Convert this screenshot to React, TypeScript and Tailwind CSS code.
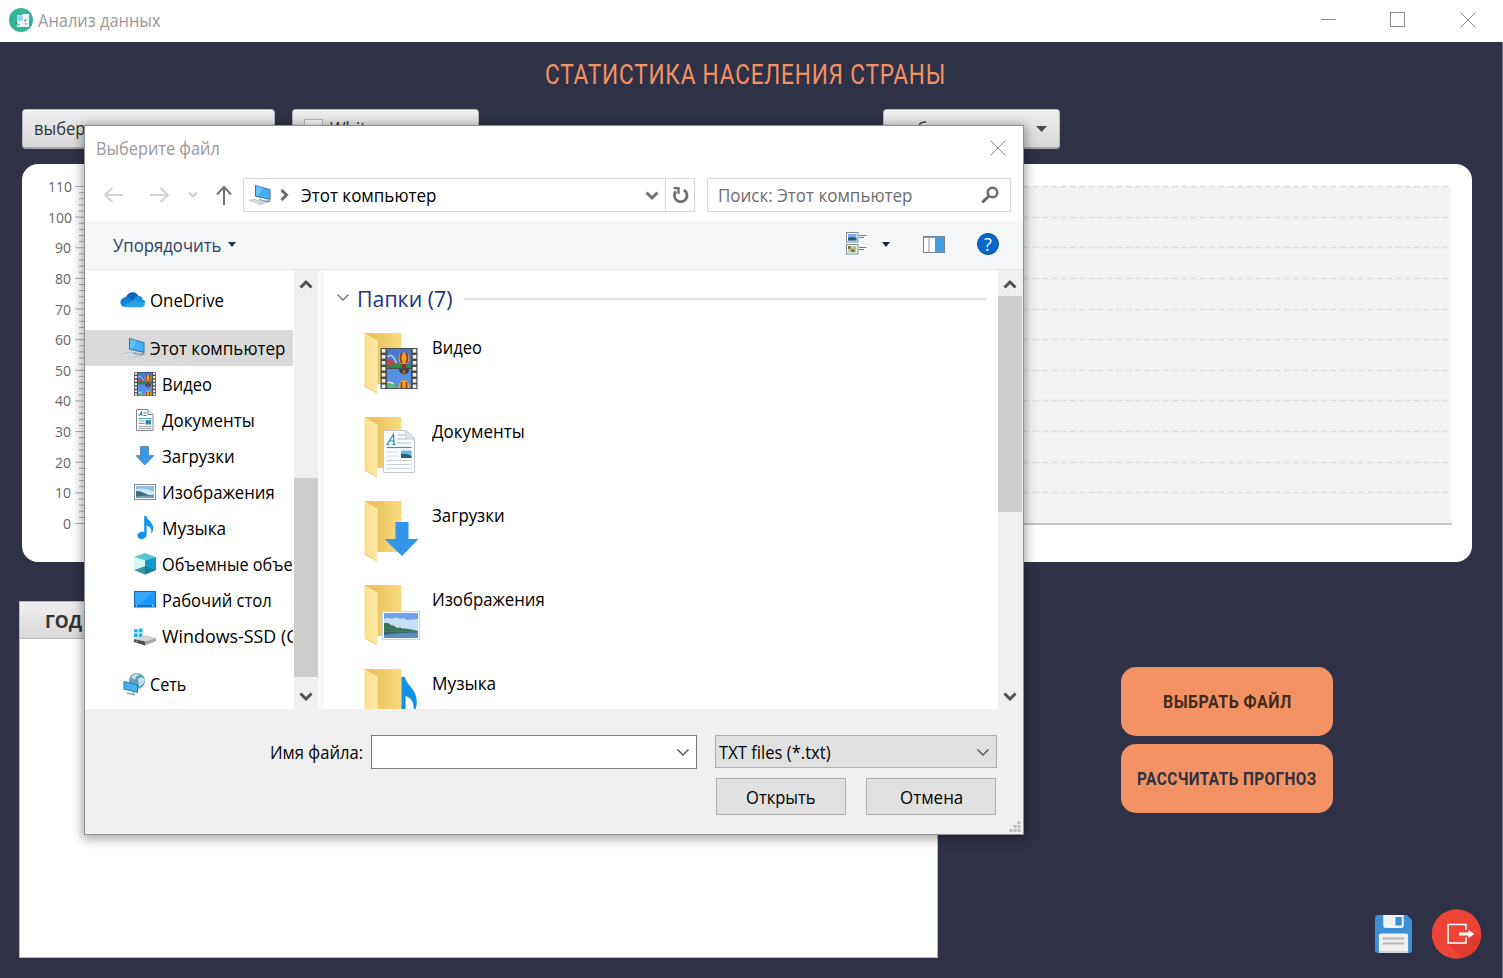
import { useLayoutEffect, useRef, useState, type ReactNode } from "react";

/* Single line of text whose glyph run is scaled horizontally to a given width. */
function Fit({ w, className = "", children }: { w: number; className?: string; children: ReactNode }) {
  const ref = useRef<HTMLSpanElement>(null);
  const [scale, setScale] = useState(1);
  useLayoutEffect(() => {
    if (ref.current && ref.current.offsetWidth) setScale(w / ref.current.offsetWidth);
  }, [w]);
  return (
    <span className={"block shrink-0 whitespace-nowrap " + className} style={{ width: w }}>
      <span ref={ref} className="inline-block origin-left" style={{ transform: `scaleX(${scale})` }}>
        {children}
      </span>
    </span>
  );
}

const Cross = () => (
  <svg width="16" height="16" viewBox="0 0 16 16" stroke="#8c8c8c" strokeWidth="1">
    <path d="M.5 .5 15.5 15.5M15.5 .5 .5 15.5" />
  </svg>
);

const Chevron = ({ dir, w = 14, color = "#505050", thick = 3 }: { dir: "up" | "down" | "right"; w?: number; color?: string; thick?: number }) => (
  <svg width={w} height={w} viewBox="0 0 14 14" fill="none" stroke={color} strokeWidth={thick}>
    <path d={dir === "up" ? "M1.5 9.500 7 4 12.5 9.500" : dir === "down" ? "M1.5 4.5 7 10 12.5 4.5" : "M4.5 2 9.5 7 4.5 12"} />
  </svg>
);

const Computer = () => (
  <svg width="24" height="22" viewBox="0 0 24 22">
    <path d="M7 1 22.5 5.2V16L7 12.6Z" fill="#3a6f96" />
    <path d="M8 2.2 21.6 6V14.8L8 11.7Z" fill="#45b0f5" />
    <path d="M8 2.2 15 4 10 12.1 8 11.7Z" fill="#63c3fb" />
    <path d="M11 15.5 17 17.2 22 16.6M18 18.2 22.5 17" stroke="#8fa3af" strokeWidth="1.4" fill="none" />
    <path d="M.3 16.3 6.5 15 18 19 12 21Z" fill="#a9b7c0" />
    <path d="M2 16.6 13.5 20M4.5 16 16 19.3M4 18 9 16M8 19 12 17.4" stroke="#f1f4f5" strokeWidth=".7" />
  </svg>
);

const FilmArt = () => (
  <>
    <rect width="37" height="41" fill="#4a4a4a" />
    <rect x="6.5" y="1" width="24" height="18.5" fill="#4878cf" />
    <rect x="6.5" y="21" width="24" height="19" fill="#5590e4" />
    <path d="M7 17V13l2-3 3 4 2-2 2 5Z" fill="#d13c59" />
    <path d="M7 9q4-4 7 2l2 4" stroke="#a7e3f0" strokeWidth="1.5" fill="none" />
    <path d="M6.5 17q10-2 24 0v2.5h-24Z" fill="#338a47" />
    <ellipse cx="23.5" cy="10.500" rx="5.500" ry="6" fill="#e7a91d" />
    <path d="M21.500 5q-3 5 0 10M25.500 5q3 5 0 10" stroke="#a3302d" strokeWidth="1.800" fill="none" />
    <rect x="21.5" y="16" width="4" height="3.5" fill="#8a2c22" />
    <path d="M18.5 21h10q0 4-3 5h-3q-4-1-4-5Z" fill="#353b45" />
    <path d="M22 22h3v5h-3Z" fill="#8d642e" />
    <path d="M7 36q4-3 8 1l2 3H7Z" fill="#5abc82" />
    <path d="M7 35q3-2 6 1" stroke="#d7edfb" strokeWidth="1.4" fill="none" />
    <path d="M18 40q0-8 5.5-8t5.5 8Z" fill="#e3b01e" />
    <path d="M21 34v6M26 34v6" stroke="#a3342b" strokeWidth="1.800" />
    {[1, 7, 13, 19, 25, 31, 36.5].map((y) => (
      <g key={y} fill="#f3f0e4">
        <rect x="1.3" y={y} width="3.6" height="3.6" />
        <rect x="32.2" y={y} width="3.6" height="3.6" />
      </g>
    ))}
  </>
);

const PageArt = () => (
  <>
    <path d="M.5 .5H23L31.5 9V42.5H.5Z" fill="#fbfcfd" stroke="#c3c8ce" />
    <path d="M23 .5V9h8.5Z" fill="#e3e6ea" stroke="#c3c8ce" />
    <path d="M14 5h9M14 9h9M14 13h14" stroke="#9cc5d8" strokeWidth="1" />
    <path d="M3.5 17.5h25" stroke="#3c93b8" strokeWidth="1.2" />
    <path d="M3.5 22h12M3.5 26h12M3.5 30.5h25M3.5 34.5h25M3.5 38.5h25" stroke="#cdd2d8" strokeWidth="1" />
    <path d="M4.500 14 10.5 4.5 11 14M6.500 11h4.500M3.500 14.500h2.500M9.5 14.5h3" stroke="#2487b3" strokeWidth="1.200" fill="none" />
    <rect x="18" y="20.500" width="10.500" height="7.500" fill="#6bb5e6" />
    <path d="M18 24q5-1 10.500 2v2H18Z" fill="#28627b" />
  </>
);

const PhotoArt = () => (
  <>
    <rect x=".5" y=".5" width="37" height="28" fill="#f6fbfd" stroke="#c4dbe4" />
    <rect x="2" y="2" width="34" height="25" fill="#6fa2ea" />
    <path d="M2 8q4-2 7 0 5-3 9 0 4-2 7 1l11-1v12H2Z" fill="#c6e1f7" />
    <path d="M2 12q4-1 7 2 3 0 6 3 3-1 5 .5 6-.5 16 2.500v.500H2Z" fill="#3d7453" />
    <rect x="2" y="20.500" width="34" height="6.500" fill="#5f8fb8" />
    <path d="M2 20.500h34v1q-18-.5-34 2.500Z" fill="#34637a" />
  </>
);

const NoteShape = () => (
  <path d="M7 0h2.200c.4 4.300 8.300 6.400 7 14.400-.4 2-1.200 3.500-2 4.600 1-5-.6-8-4.700-9.200V19.500c0 2.300-2.300 4.400-5.200 4.400C1.700 23.900 0 22.600 0 20.600 0 17.700 3.800 15.700 7 16.800Z" fill="#0f93e8" />
);

const Folder = ({ children }: { children: ReactNode }) => (
  <svg width="60" height="64" viewBox="0 0 60 64" className="shrink-0">
    <defs>
      <linearGradient id="fb" x2="1"><stop offset="0" stopColor="#e5bd57" /><stop offset=".5" stopColor="#efca66" /><stop offset="1" stopColor="#fbdb80" /></linearGradient>
      <linearGradient id="ff" x2="1"><stop offset="0" stopColor="#fbdf8c" /><stop offset="1" stopColor="#fce8a7" /></linearGradient>
    </defs>
    <path d="M.5 1H37.500V52H10Z" fill="url(#fb)" />
    <path d="M.5 1 13.300 8.500Q13.800 9 13.800 10V52L12.800 61 .5 54Z" fill="url(#ff)" />
    <path d="M.5 54 12.800 61" stroke="#e4c165" strokeWidth=".8" />
    {children}
  </svg>
);

const DownArrow = () => <path d="M11 0H24V17H34L17.500 34 0 17H11Z" fill="#3294ea" />;

const folders: { name: string; w: number; art: ReactNode }[] = [
  { name: "Видео", w: 50, art: <g transform="translate(16.500 16)"><FilmArt /></g> },
  { name: "Документы", w: 93, art: <g transform="translate(19 14)"><rect x="-6" y="38" width="8" height="8" fill="#fff" /><PageArt /></g> },
  { name: "Загрузки", w: 73, art: <g transform="translate(20.500 22)"><DownArrow /></g> },
  { name: "Изображения", w: 113, art: <g transform="translate(18 27)"><PhotoArt /></g> },
  { name: "Музыка", w: 64, art: <g transform="translate(26 9) scale(1.640 1.950)"><NoteShape /></g> },
];

const tree: { name: string; w: number; icon: ReactNode }[] = [
  { name: "Видео", w: 50, icon: <svg width="22" height="24" viewBox="0 0 37 41"><FilmArt /></svg> },
  {
    name: "Документы", w: 93,
    icon: (
      <svg width="22" height="24" viewBox="0 0 22 24">
        <path d="M2.500 1.500H14L19 6.500V22.500H2.500Z" fill="#fff" stroke="#83898e" />
        <path d="M14 1.500v5h5" fill="#eef0f2" stroke="#83898e" />
        <path d="M5 8 7.500 3.500 8 8M6 6.500h2M9.500 5h3M9.500 7.500h3" stroke="#2386b8" fill="none" />
        <path d="M4.500 10.500H17M4.500 13h6M4.500 15.500h6" stroke="#4b9fca" />
        <path d="M4.500 18.500H17M4.500 20.500H17" stroke="#a0a7ad" />
        <rect x="11.500" y="12" width="5.500" height="4.500" fill="#3e85aa" />
      </svg>
    ),
  },
  { name: "Загрузки", w: 73, icon: <svg width="22" height="24" viewBox="0 0 22 24"><path d="M6.500 2.500h8v9h5.500L10.700 21 2 11.500h4.500Z" fill="#3b98e8" stroke="#5b83a8" strokeWidth=".8" /></svg> },
  {
    name: "Изображения", w: 113,
    icon: (
      <svg width="22" height="24" viewBox="0 0 22 24">
        <rect x=".5" y="4.500" width="21" height="15" fill="#fff" stroke="#8a9096" />
        <rect x="2" y="6" width="18" height="12" fill="#8cbdf0" />
        <path d="M2 9.500q6-3 18 2v3H2Z" fill="#d3e9f8" />
        <path d="M2 11q4-.5 8 2t10 2.500V18H2Z" fill="#3a7177" />
        <path d="M2 16.500q9-1.500 18-1V18H2Z" fill="#6aa3cc" />
      </svg>
    ),
  },
  { name: "Музыка", w: 64, icon: <svg width="22" height="24" viewBox="-3.500 0 22 24"><g transform="scale(.96)"><NoteShape /></g></svg> },
  {
    name: "Объемные объекты", w: 159,
    icon: (
      <svg width="22" height="24" viewBox="0 0 22 24">
        <path d="M0 5 11 1 22 5 11 8.500Z" fill="#57c6d3" />
        <path d="M0 5 11 8.500V22.500L0 18Z" fill="#a5e8e8" />
        <path d="M22 5 11 8.500V22.500L22 18Z" fill="#0f9ccb" />
        <path d="M0 18 11 14 22 18 11 22.500Z" fill="#17788e" opacity=".75" />
        <path d="M0 5 11 8.500V14L0 18Z" fill="#d5f6f3" />
      </svg>
    ),
  },
  {
    name: "Рабочий стол", w: 110,
    icon: (
      <svg width="22" height="24" viewBox="0 0 22 24">
        <rect x=".5" y="3.500" width="21" height="15.500" fill="#1d97fb" stroke="#1669ab" />
        <path d="M1 4h19L5 16.500H1Z" fill="#42abff" opacity=".7" />
        <path d="M1 17.800h20" stroke="#126fb9" strokeWidth="1.500" />
        <path d="M2 17.800h1M18 17.800h2" stroke="#fff" />
      </svg>
    ),
  },
  {
    name: "Windows-SSD (C:)", w: 145,
    icon: (
      <svg width="22" height="24" viewBox="0 0 22 24">
        <path d="M0 5.500 3.700 5v3.600H0ZM4.700 4.800 8.500 4.200v4.400H4.700ZM0 9.600h3.700v3.700L0 12.700ZM4.700 9.600h3.800V14l-3.800-.6Z" fill="#15b5e8" />
        <path d="M0 15 11 11 22 14 11 17.500Z" fill="#d6d6d6" />
        <path d="M0 15 11 17.500V21.500L0 18Z" fill="#484b4c" />
        <path d="M11 17.500 22 14v3L11 21.500Z" fill="#a5a8aa" />
        <circle cx="3" cy="17.500" r=".8" fill="#7fe0a0" />
      </svg>
    ),
  },
];

const combo = "flex h-[40px] items-center rounded-[4px] border border-[#b5b6bb] border-b-2 border-b-[#a4a6ad] bg-gradient-to-b from-[#eeeeee] to-[#d8d8d8] shadow-[inset_0_1px_0_#ffffff] text-[18px] text-[#333333]";

function ChartAxis() {
  const step = 337 / 11;
  return (
    <svg width="1430" height="398" viewBox="0 0 1430 398" className="block">
      <rect x="62" y="23" width="1367" height="337" fill="#f3f3f3" />
      {Array.from({ length: 11 }, (_, i) => (
        <path key={i} d={`M62 ${22.5 + Math.round(i * step)}H1429`} stroke="#dddddd" strokeDasharray="6 3.300" strokeWidth="1.300" />
      ))}
      {Array.from({ length: 56 }, (_, i) => (
        <path key={i} d={`M${i % 5 ? 57 : 53} ${22.5 + (i * 337) / 55}H64`} stroke="#b0b0b0" />
      ))}
      <path d="M62 360H1430" stroke="#909090" />
      <g fill="#666666" fontSize="14" textAnchor="end">
        {Array.from({ length: 12 }, (_, i) => (
          <text key={i} x={i < 2 ? 50 : 49} y={28 + i * step}>{110 - i * 10}</text>
        ))}
      </g>
    </svg>
  );
}

function FileDialog() {
  return (
    <div className="absolute left-[84px] top-[125px] flex h-[710px] w-[940px] flex-col overflow-hidden border border-[#8d8f94] bg-white text-[17.500px] leading-6 text-black">
      <div className="flex h-[44px] shrink-0 items-center justify-between pl-[11px] pr-[17px] text-[#999999]">
        <Fit w={124}>Выберите файл</Fit>
        <Cross />
      </div>
      <div className="flex h-[51px] shrink-0 items-center pb-[2px]">
        <svg width="134" height="24" viewBox="0 0 134 24" className="ml-[16px] shrink-0" fill="none">
          <path d="M22 12H4M11.500 5 4 12l7.500 7M49 12H67M59.500 5 67 12l-7.500 7" stroke="#d4d4d4" strokeWidth="2" />
          <path d="M88 9.500 92 13.500 96 9.500" stroke="#d0d0d0" strokeWidth="2.200" />
          <path d="M123 22V4M116 11.500 123 4l7 7.500" stroke="#737373" strokeWidth="2" />
        </svg>
        <div className="ml-[8px] flex h-[34px] w-[452px] shrink-0 items-center border border-[#d9d9d9]">
          <span className="ml-[4px]"><Computer /></span>
          <span className="ml-[5px]"><Chevron dir="right" color="#6b6b6b" /></span>
          <Fit w={135} className="ml-[10px]">Этот компьютер</Fit>
          <span className="ml-[209px]"><Chevron dir="down" color="#707070" /></span>
          <span className="ml-[6px] flex h-full flex-1 items-center justify-center border-l border-[#d9d9d9]">
            <svg width="20" height="20" viewBox="0 0 20 20" fill="none" stroke="#6f6f6f" strokeWidth="2.800">
              <path d="M6 6.300A6.300 6.300 0 1 0 13.800 5" />
              <path d="M3.500 3.200H8.500V9" strokeWidth="2.300" />
            </svg>
          </span>
        </div>
        <div className="ml-[12px] flex h-[34px] w-[304px] items-center justify-between border border-[#d9d9d9] pl-[10px] pr-[11px] text-[#6d6d6d]">
          <Fit w={194}>Поиск: Этот компьютер</Fit>
          <svg width="18" height="18" viewBox="0 0 18 18" fill="none" stroke="#6c6c6c">
            <circle cx="11.500" cy="6.500" r="4.800" strokeWidth="2.500" />
            <path d="M8 10 1.300 16.300" strokeWidth="3" />
          </svg>
        </div>
      </div>
      <div className="flex h-[49px] shrink-0 items-center border-b border-[#e2e7ea] bg-[#f4f6f8] pb-[2px] text-[#2c4264]">
        <Fit w={108} className="ml-[28px] mt-px">Упорядочить</Fit>
        <svg width="8" height="5" viewBox="0 0 8 5" className="ml-[7px]"><path d="M0 0h8L4 5Z" fill="#21374f" /></svg>
        <svg width="22" height="24" viewBox="0 0 22 24" className="ml-[610px]" fill="none">
          <rect x=".5" y=".5" width="11.500" height="9.500" fill="#fff" stroke="#7f8992" />
          <rect x="2" y="2" width="8.500" height="6.500" fill="#77a9f0" />
          <path d="M2 6q4-2 8.500 0v2.500H2Z" fill="#22616a" />
          <rect x=".5" y="12.500" width="11.500" height="9.500" fill="#fff" stroke="#7f8992" />
          <rect x="2" y="14" width="8.500" height="6.500" fill="#b9d3bd" />
          <path d="M2 14h3v3H2ZM5 17h4v3H5Z" fill="#7a7e2e" />
          <path d="M7 15h3v3H7Z" fill="#d6b52e" />
          <path d="M13 3.500h7.500M13 5.500h5M13 15.500h7.500M13 17.500h5" stroke="#777" />
        </svg>
        <svg width="8" height="5" viewBox="0 0 8 5" className="ml-[14px]"><path d="M0 0h8L4 5Z" fill="#17283d" /></svg>
        <svg width="22" height="17" viewBox="0 0 22 17" className="ml-[33px]">
          <rect x=".5" y=".5" width="21" height="16" fill="#fff" stroke="#74828c" />
          <rect x="12" y="2" width="9" height="14" fill="#3e9fe6" />
          <path d="M6 1v15M1 1.500h20" stroke="#8b98a1" />
        </svg>
        <span className="ml-[32px] flex size-[22px] items-center justify-center rounded-full border border-[#084c94] bg-[#0868cf] text-[18px] leading-none text-white">?</span>
      </div>
      <div className="flex h-[439px] shrink-0">
        <div className="w-[208px] shrink-0 overflow-hidden pt-[12px]">
          <div className="flex h-[36px] items-center pl-[35px]">
            <svg width="26" height="18" viewBox="0 0 26 18">
              <path d="M6 6C8 1 15-1 18.500 5L13 11 5 8Z" fill="#0f64b8" />
              <path d="M5.500 16C-1 16-1.500 7 5.500 6q4-.5 9 4L9 16Z" fill="#1282d4" />
              <path d="M14 8q3-5 7-2.500 1.500 1 1.500 3 3 .5 2.800 3.800L16 13Z" fill="#1a90de" />
              <path d="M3 15 15.500 8.500 25 13q-1 3.300-4 3.300H6Q4 16.300 3 15Z" fill="#28a3e8" />
            </svg>
            <Fit w={74} className="ml-[4px]">OneDrive</Fit>
          </div>
          <div className="mt-[12px] flex h-[36px] items-center bg-[#d9d9d9] pl-[37px]">
            <Computer />
            <Fit w={135} className="ml-[4px]">Этот компьютер</Fit>
          </div>
          {tree.map((t) => (
            <div key={t.name} className="flex h-[36px] items-center pl-[49px]">
              <span className="shrink-0">{t.icon}</span>
              <Fit w={t.w} className="ml-[6px]">{t.name}</Fit>
            </div>
          ))}
          <div className="mt-[12px] flex h-[36px] items-center pl-[38px]">
            <svg width="24" height="24" viewBox="0 0 24 24">
              <circle cx="14" cy="9" r="8" fill="#609fbd" />
              <path d="M8 5q4-5 9-3-5 3-5 6ZM15 7q4-4 7 1-2 6-6 6Z" fill="#c3dfe8" />
              <path d="M.5 9 15 12.500V21L.5 17.500Z" fill="#2778ab" />
              <path d="M1.500 10.200 14 13.300V19.700L1.500 16.700Z" fill="#47b0ef" />
              <path d="M4 21 12 23M10 20v2" stroke="#8ea9b7" strokeWidth="1.300" />
            </svg>
            <Fit w={36} className="ml-[3px]">Сеть</Fit>
          </div>
        </div>
        <div className="ml-px flex w-[24px] shrink-0 flex-col items-center bg-[#f0f0f0] pt-[8px]">
          <Chevron dir="up" />
          <span className="mt-[186px] h-[199px] w-full shrink-0 bg-[#cdcdcd]" />
          <span className="mt-[12px]"><Chevron dir="down" /></span>
        </div>
        <div className="w-[5px] shrink-0 border-r border-[#f0f0f0] bg-[#fafafa]" />
        <div className="min-w-0 flex-1 overflow-hidden">
          <div className="flex h-[62px] items-center pb-[5px] pl-[13px] text-[22px] text-[#26327f]">
            <span className="mt-[-4px]"><Chevron dir="down" color="#707070" thick={1.3} /></span>
            <Fit w={96} className="ml-[7px] mt-[-1px]">Папки (7)</Fit>
            <span className="ml-[11px] h-[2px] w-[522px] bg-[#e3e3e3]" />
          </div>
          {folders.map((f) => (
            <div key={f.name} className="flex h-[84px] pl-[41px]">
              <Folder>{f.art}</Folder>
              <Fit w={f.w} className="ml-[8px] mt-[3px]">{f.name}</Fit>
            </div>
          ))}
        </div>
        <div className="flex w-[25px] shrink-0 flex-col items-center bg-[#f0f0f0] pr-px pt-[8px]">
          <Chevron dir="up" />
          <span className="mb-[177px] mt-[4px] h-[216px] w-full shrink-0 bg-[#cdcdcd]" />
          <Chevron dir="down" />
        </div>
      </div>
      <div className="relative flex-1 bg-[#f0f0f0] pt-[26px]">
        <div className="flex h-[34px] items-center">
          <Fit w={93} className="ml-[185px]">Имя файла:</Fit>
          <div className="ml-[8px] flex h-[34px] w-[326px] items-center justify-end border border-[#7a7a7a] bg-white pr-[6px]">
            <Chevron dir="down" thick={1.3} />
          </div>
          <div className="mb-px ml-[18px] flex h-[33px] w-[282px] items-center justify-between border border-[#adadad] bg-[#e1e1e1] pl-[3px] pr-[6px]">
            <Fit w={112}>TXT files (*.txt)</Fit>
            <Chevron dir="down" thick={1.3} />
          </div>
        </div>
        <div className="mt-[9px] flex gap-[20px] pl-[631px]">
          <div className="flex h-[37px] w-[130px] items-center justify-center border border-[#adadad] bg-[#e1e1e1]"><Fit w={70}>Открыть</Fit></div>
          <div className="flex h-[37px] w-[130px] items-center justify-center border border-[#adadad] bg-[#e1e1e1]"><Fit w={63}>Отмена</Fit></div>
        </div>
        <svg width="12" height="12" viewBox="0 0 12 12" className="absolute bottom-px right-[2px]" fill="#bdbdbd">
          <path d="M8.500 0h3v3h-3ZM8.500 4h3v3h-3ZM8.500 8h3v3h-3ZM4.500 4h3v3h-3ZM4.500 8h3v3h-3ZM.5 8h3v3h-3Z" />
        </svg>
      </div>
    </div>
  );
}

export default function App() {
  return (
    <div className="relative flex h-[978px] w-[1503px] flex-col overflow-hidden bg-[#2f3247] font-['Open_Sans','Noto_Sans',sans-serif]">
      <header className="flex h-[42px] shrink-0 items-center bg-white pb-[3px] pl-[9px] text-[17.500px] text-[#999999]">
        <svg width="24" height="24" viewBox="0 0 24 24">
          <circle cx="12" cy="12" r="12" fill="#35b597" />
          <path d="M8 7h5l1-1h6v13H8Z" fill="#e9f3f8" />
          <circle cx="11" cy="10" r="3" fill="#8fd6ef" />
          <path d="M6.500 14l2 1.500M8.500 17l2-.5M15.500 13.500l1.500-2" stroke="#5d7480" strokeWidth="1.200" />
          <path d="M16 15h1.500v1.500H16Z" fill="#e4785c" />
        </svg>
        <Fit w={123} className="ml-[5px] mt-px">Анализ данных</Fit>
        <div className="ml-auto flex items-center gap-[54px] pr-[27px]">
          <span className="h-px w-[15px] bg-[#8c8c8c]" />
          <span className="size-[15px] border border-[#8c8c8c]" />
          <span className="ml-[1px]"><Cross /></span>
        </div>
      </header>
      <main className="flex flex-1 flex-col border-r border-[#74778a]">
        <h1 className="ml-[545px] mt-[12px] h-[42px] font-['Roboto','Open_Sans',sans-serif] text-[28px] leading-[42px] text-[#f39364]">
          <Fit w={401} className="tracking-[1px]">СТАТИСТИКА НАСЕЛЕНИЯ СТРАНЫ</Fit>
        </h1>
        <div className="ml-[22px] mt-[13px] flex">
          <div className={combo + " w-[253px] pl-[11px]"}><Fit w={79}>выберите</Fit></div>
          <div className={combo + " ml-[17px] w-[187px] pl-[11px]"}>
            <span className="mr-[7px] size-[19px] border border-[#b8b8b8] bg-[#f7f7f7]" />
            <Fit w={46}>White</Fit>
          </div>
          <div className={combo + " ml-[404px] w-[177px] justify-between pl-[11px] pr-[12px]"}>
            <Fit w={79}>выберите</Fit>
            <svg width="11" height="6" viewBox="0 0 11 6"><path d="M0 0h11L5.500 6Z" fill="#4b4b4b" /></svg>
          </div>
        </div>
        <div className="ml-[22px] mt-[15px] h-[398px] w-[1450px] overflow-hidden rounded-[16px] bg-white">
          <ChartAxis />
        </div>
        <div className="ml-[19px] mt-[39px] flex h-[357px]">
          <div className="h-[357px] w-[919px] border border-[#b9bac0] bg-white">
            <div className="flex h-[37px] items-center border-b border-[#b9b9b9] bg-gradient-to-b from-[#eeeeee] to-[#dadada] pl-[25px] pt-[2px] text-[18px] font-bold text-[#333333]">
              <Fit w={37}>ГОД</Fit>
            </div>
          </div>
          <div className="ml-[183px] mt-[66px] flex flex-col gap-[8px] font-['Roboto','Open_Sans',sans-serif] text-[18px] font-bold text-[#2f3040]">
            <div className="flex h-[69px] w-[212px] shrink-0 items-center justify-center rounded-[15px] bg-[#f39364] text-[#42291c]"><Fit w={129} className="tracking-[0.500px]">ВЫБРАТЬ ФАЙЛ</Fit></div>
            <div className="flex h-[69px] w-[212px] shrink-0 items-center justify-center rounded-[15px] bg-[#f39364] pb-px"><Fit w={180} className="tracking-[0.500px]">РАССЧИТАТЬ ПРОГНОЗ</Fit></div>
            <div className="ml-[254px] mt-[88px] flex w-[107px] shrink-0 items-center gap-[20px]">
              <svg width="37" height="38" viewBox="0 0 38 38" preserveAspectRatio="none" className="shrink-0">
                <path d="M3 0H33L38 5V35q0 3-3 3H3q-3 0-3-3V3Q0 0 3 0Z" fill="#3c8fd2" />
                <path d="M8.500 0H29.500V10.500q0 2.500-2.500 2.500H11q-2.500 0-2.500-2.500Z" fill="#f2f2f2" />
                <rect x="21" y="2" width="6.500" height="8.500" fill="#3c8fd2" />
                <path d="M4 20.500q0-2 2-2H32q2 0 2 2V38H4Z" fill="#efefef" />
                <path d="M4 36H34V38H4Z" fill="#d3d3d3" />
                <path d="M8 23.500H30M8 28.500H30" stroke="#b5b5b5" strokeWidth="2" />
              </svg>
              <svg width="50" height="50" viewBox="0 0 50 50" className="shrink-0">
                <circle cx="24.500" cy="25" r="24.700" fill="#ee4438" />
                <path d="M16 34 30 49q17-4 19-22L42 24.500 34 34Z" fill="#df3b31" />
                <path d="M34 21V15.500H16V34H34V28.500" fill="none" stroke="#fff" strokeWidth="1.600" />
                <path d="M27 23.500h9.500V21L42.500 25l-6 4V26.500H27Z" fill="#fff" />
              </svg>
            </div>
          </div>
        </div>
      </main>
      <div className="pointer-events-none absolute left-[84px] top-[125px] h-[710px] w-[940px] shadow-[0_2px_10px_2px_rgba(0,0,0,0.35)]" />
      <FileDialog />
    </div>
  );
}
